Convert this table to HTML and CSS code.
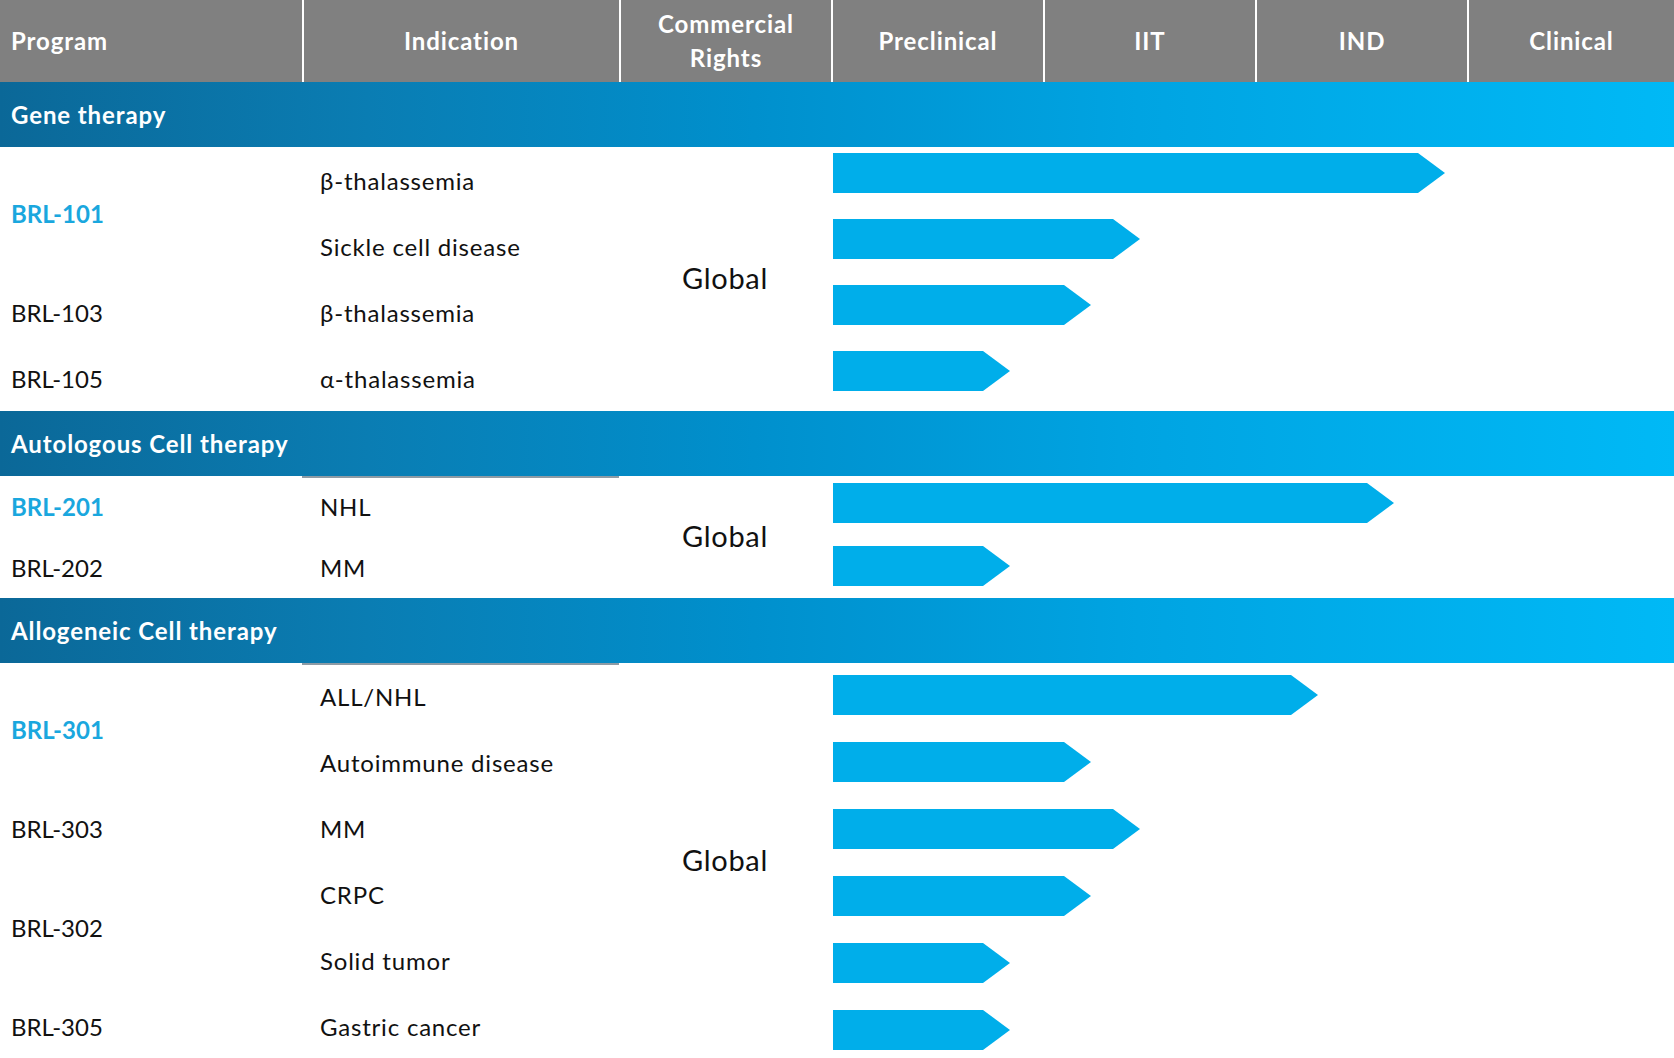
FILE: index.html
```html
<!DOCTYPE html>
<html lang="en">
<head>
<meta charset="utf-8">
<title>Pipeline</title>
<link rel="stylesheet" href="styles.css">
</head>
<body>
<div class="pipeline">
  <div class="head">
    <div class="hc hc-program">Program</div>
    <div class="hc hc-ind">Indication</div>
    <div class="hc hc-rights">Commercial<br>Rights</div>
    <div class="hc hc-stage">Preclinical</div>
    <div class="hc hc-stage">IIT</div>
    <div class="hc hc-stage">IND</div>
    <div class="hc hc-last">Clinical</div>
  </div>

  <div class="band">Gene therapy</div>
  <div class="section s-gene">
    <div class="prog lead r1-2">BRL-101</div>
    <div class="prog r3">BRL-103</div>
    <div class="prog r4">BRL-105</div>
    <div class="ind">β-thalassemia</div>
    <div class="ind">Sickle cell disease</div>
    <div class="ind">β-thalassemia</div>
    <div class="ind">α-thalassemia</div>
    <div class="rights">Global</div>
    <div class="bars">
      <div class="bar" style="width:612px"></div>
      <div class="bar" style="width:307px"></div>
      <div class="bar" style="width:258px"></div>
      <div class="bar" style="width:177px"></div>
    </div>
  </div>

  <div class="band">Autologous Cell therapy</div>
  <div class="section s-auto">
    <div class="prog lead r1">BRL-201</div>
    <div class="prog r2">BRL-202</div>
    <div class="ind ruled">NHL</div>
    <div class="ind">MM</div>
    <div class="rights">Global</div>
    <div class="bars">
      <div class="bar" style="width:561px"></div>
      <div class="bar" style="width:177px"></div>
    </div>
  </div>

  <div class="band">Allogeneic Cell therapy</div>
  <div class="section s-allo">
    <div class="prog lead r1-2">BRL-301</div>
    <div class="prog r3">BRL-303</div>
    <div class="prog r4-5">BRL-302</div>
    <div class="prog r6">BRL-305</div>
    <div class="ind ruled">ALL/NHL</div>
    <div class="ind">Autoimmune disease</div>
    <div class="ind">MM</div>
    <div class="ind">CRPC</div>
    <div class="ind">Solid tumor</div>
    <div class="ind">Gastric cancer</div>
    <div class="rights">Global</div>
    <div class="bars">
      <div class="bar" style="width:485px"></div>
      <div class="bar" style="width:258px"></div>
      <div class="bar" style="width:307px"></div>
      <div class="bar" style="width:258px"></div>
      <div class="bar" style="width:177px"></div>
      <div class="bar" style="width:177px"></div>
    </div>
  </div>
</div>
</body>
</html>
```

FILE: styles.css
```css
* { box-sizing: border-box; }
html, body {
  margin: 0;
  padding: 0;
  background: #ffffff;
}
body {
  font-family: Lato, "Open Sans", "DejaVu Sans", sans-serif;
  color: #111111;
  width: 1674px;
  height: 1058px;
  overflow: hidden;
}
.pipeline {
  display: flex;
  flex-direction: column;
}

/* header */
.head {
  display: flex;
  height: 82px;
  background: #808080;
  color: #ffffff;
  font-weight: 700;
  font-size: 24px;
  letter-spacing: 0.9px;
}
.hc {
  display: flex;
  align-items: center;
  justify-content: center;
  text-align: center;
  line-height: 34px;
  border-left: 2px solid #ffffff;
}
.hc-program {
  width: 302px;
  border-left: none;
  justify-content: flex-start;
  padding-left: 11px;
}
.hc-ind { width: 317px; }
.hc-rights { width: 212px; }
.hc-stage { width: 212px; }
.hc-last { flex: 1; }

/* category band */
.band {
  height: 65px;
  display: flex;
  align-items: center;
  padding-left: 11px;
  color: #ffffff;
  font-weight: 700;
  font-size: 24px;
  letter-spacing: 0.9px;
  background: linear-gradient(90deg, #0b6898 0%, #0a7db3 22%, #0090cd 45%, #00a4e2 68%, #00b9f6 100%);
}

/* section grid */
.section {
  display: grid;
  grid-template-columns: 302px 317px 212px 1fr;
  grid-auto-flow: column;
}
.s-gene { grid-template-rows: repeat(4, 66px); }
.s-auto { grid-template-rows: repeat(2, 61px); }
.s-allo { grid-template-rows: repeat(6, 66px); height: 395px; }

.prog {
  grid-column: 1;
  display: flex;
  align-items: center;
  padding-left: 11px;
  font-size: 24px;
  color: #111111;
}
.prog.lead {
  color: #1aa7de;
  font-weight: 700;
}
.r1 { grid-row: 1; }
.r2 { grid-row: 2; }
.r3 { grid-row: 3; }
.r4 { grid-row: 4; }
.r6 { grid-row: 6; }
.r1-2 { grid-row: 1 / span 2; }
.r4-5 { grid-row: 4 / span 2; }

.ind {
  grid-column: 2;
  display: flex;
  align-items: center;
  padding-left: 18px;
  font-size: 24px;
  letter-spacing: 0.8px;
  color: #111111;
}
.ind.ruled {
  box-shadow: inset 0 2px 0 #8d9ba5;
}

.rights {
  grid-column: 3;
  grid-row: 1 / -1;
  display: flex;
  align-items: center;
  justify-content: center;
  font-size: 29px;
  letter-spacing: 0.7px;
  padding-bottom: 4px;
  color: #111111;
}

.bars {
  grid-column: 4;
  grid-row: 1 / -1;
  display: flex;
  flex-direction: column;
  padding-left: 2px;
}
.s-gene .bars { padding-top: 6px; gap: 26px; }
.s-auto .bars { padding-top: 7px; gap: 23px; }
.s-allo .bars { padding-top: 12px; gap: 27px; }

.bar {
  height: 40px;
  background: #00aeea;
  clip-path: polygon(0 0, calc(100% - 27px) 0, 100% 50%, calc(100% - 27px) 100%, 0 100%);
}
```
